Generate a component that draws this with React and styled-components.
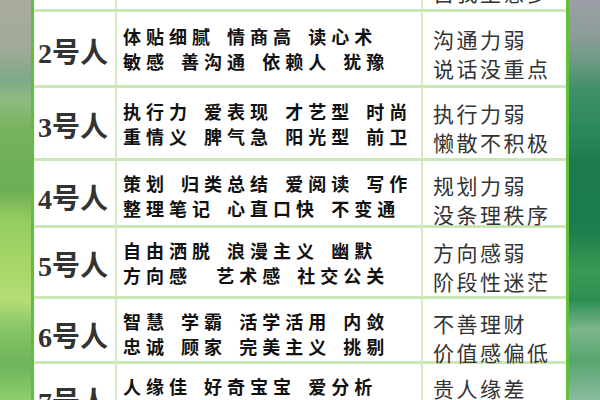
import React from "react";
import styled, { createGlobalStyle } from "styled-components";

const GlobalStyle = createGlobalStyle`
  html, body {
    margin: 0;
    padding: 0;
    background: #ffffff;
  }
  * {
    box-sizing: border-box;
  }
`;

// rows of the chart; the first one is cut off by the top of the picture
const rows = [
  {
    num: "1",
    height: 76,
    traits: ["独立自主 领导力 果断", "好胜心强 有主见"],
    weak: ["固执己见", "自我主意多"],
  },
  {
    num: "2",
    height: 76,
    traits: ["体贴细腻 情商高 读心术", "敏感 善沟通 依赖人 犹豫"],
    weak: ["沟通力弱", "说话没重点"],
  },
  {
    num: "3",
    height: 73,
    traits: ["执行力 爱表现 才艺型 时尚", "重情义 脾气急 阳光型 前卫"],
    weak: ["执行力弱", "懒散不积极"],
  },
  {
    num: "4",
    height: 67,
    traits: ["策划 归类总结 爱阅读 写作", "整理笔记 心直口快 不变通"],
    weak: ["规划力弱", "没条理秩序"],
  },
  {
    num: "5",
    height: 71,
    traits: ["自由洒脱 浪漫主义 幽默", "方向感  艺术感 社交公关"],
    weak: ["方向感弱", "阶段性迷茫"],
  },
  {
    num: "6",
    height: 65,
    traits: ["智慧 学霸 活学活用 内敛", "忠诚 顾家 完美主义 挑剔"],
    weak: ["不善理财", "价值感偏低"],
  },
  {
    num: "7",
    height: 70,
    traits: ["人缘佳 好奇宝宝 爱分析", "爱思考 追求真理 孤独"],
    weak: ["贵人缘差", "容易钻牛角尖"],
  },
];

function App() {
  return (
    <>
      <GlobalStyle />
      <Page>
        <SideStrip side="left" />
        <Table>
          <Rows>
            {rows.map((row) => (
              <Row key={row.num} h={row.height}>
                <NumCell>{row.num}号人</NumCell>
                <TraitCell>
                  {row.traits.map((line) => (
                    <div key={line}>{line}</div>
                  ))}
                </TraitCell>
                <WeakCell>
                  {row.weak.map((line) => (
                    <div key={line}>{line}</div>
                  ))}
                </WeakCell>
              </Row>
            ))}
          </Rows>
        </Table>
        <SideStrip side="right" />
      </Page>
    </>
  );
}

const Page = styled.div`
  display: flex;
  width: 600px;
  height: 400px;
  overflow: hidden;
  background: #ffffff;
`;

const SideStrip = styled.div`
  width: 31px;
  flex-shrink: 0;
  background: ${(p) =>
    p.side === "left"
      ? `linear-gradient(
          180deg,
          #a9ab9c 0px,
          #a2ab97 45px,
          #7fa889 80px,
          #8fba80 100px,
          #76b35d 130px,
          #6cad57 190px,
          #96cd60 220px,
          #a8d768 270px,
          #b4dd76 300px,
          #86c366 330px,
          #6db45a 365px,
          #8fce6e 400px
        )`
      : `linear-gradient(
          180deg,
          #9c9fa6 0px,
          #8c9c98 35px,
          #6f9a86 60px,
          #3f9068 90px,
          #2b885a 130px,
          #1c7a4d 165px,
          #1d7d4e 230px,
          #3a9954 270px,
          #2c8e52 300px,
          #7db68e 330px,
          #56a56d 360px,
          #8bba9e 400px
        )`};
`;

const Table = styled.div`
  flex: 1;
  overflow: hidden;
  border-left: 3px solid #5fbf3b;
  border-right: 3px solid #5fbf3b;
  background: #ffffff;
`;

const Rows = styled.div`
  display: flex;
  flex-direction: column;
  margin-top: -64px;
`;

const Row = styled.div`
  display: grid;
  grid-template-columns: 83px 306px 1fr;
  height: ${(p) => p.h}px;
  flex-shrink: 0;
  border-bottom: 3px solid #cbe7b5;
`;

const Cell = styled.div`
  display: flex;
  flex-direction: column;
  justify-content: center;
  border-right: 2px solid #d3ecc1;
  color: #222;
  white-space: pre;
`;

const NumCell = styled(Cell)`
  align-items: center;
  padding: 4px 3px 0 0;
  font-family: "Liberation Serif", "Noto Sans CJK SC", serif;
  font-weight: 700;
  font-size: 28px;
  color: #333333;
`;

const TraitCell = styled(Cell)`
  padding: 1px 0 0 6px;
  font-family: "Noto Sans CJK SC", sans-serif;
  font-weight: 700;
  font-size: 18px;
  letter-spacing: 5px;
  word-spacing: 3px;
  line-height: 25px;
  color: #111111;
`;

const WeakCell = styled(Cell)`
  border-right: none;
  padding: 10px 0 0 10px;
  font-family: "Noto Sans CJK SC", sans-serif;
  font-weight: 400;
  font-size: 21px;
  letter-spacing: 2.5px;
  line-height: 29px;
  color: #333333;
`;

export default App;
